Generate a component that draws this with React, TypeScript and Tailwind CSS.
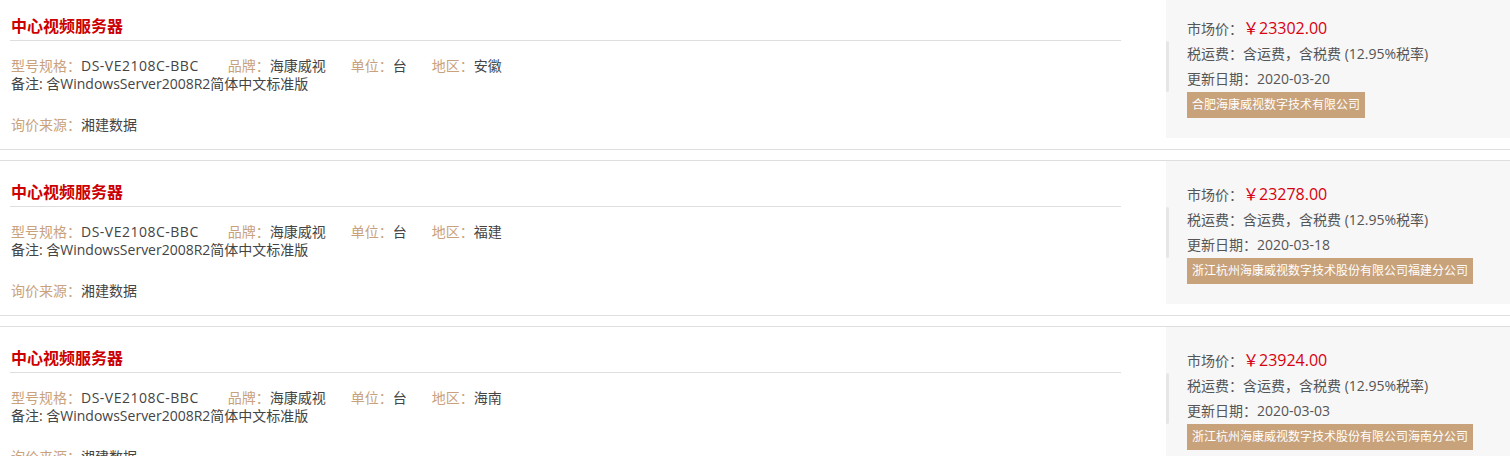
import React from 'react';

type Quote = {
  region: string;
  price: string;
  date: string;
  company: string;
};

const quotes: Quote[] = [
  { region: '安徽', price: '23302.00', date: '2020-03-20', company: '合肥海康威视数字技术有限公司' },
  { region: '福建', price: '23278.00', date: '2020-03-18', company: '浙江杭州海康威视数字技术股份有限公司福建分公司' },
  { region: '海南', price: '23924.00', date: '2020-03-03', company: '浙江杭州海康威视数字技术股份有限公司海南分公司' },
];

function Field({ label, value, wide }: { label: string; value: string; wide?: boolean }) {
  return (
    <span className={wide ? 'mr-[29px] whitespace-nowrap' : 'mr-[25px] whitespace-nowrap'}>
      <span className="text-[#c9a27c]">{label}：</span>
      <span className={wide ? 'text-[#444] tracking-[0.5px]' : 'text-[#444]'}>{value}</span>
    </span>
  );
}

function QuoteItem({ q }: { q: Quote }) {
  return (
    <div className="flex border-y border-[#dedede] mb-[10px] bg-white">
      {/* left: product info */}
      <div className="flex-1 pl-[10px] pr-[45px] pb-[15px]">
        <h3 className="pt-[17px] pl-px leading-[28px] text-[16px] font-bold text-[#cc0000] border-b border-[#dedede]">
          中心视频服务器
        </h3>
        <div className="mt-[16px] pl-px text-[14px] leading-[18px]">
          <div className="flex">
            <Field label="型号规格" value="DS-VE2108C-BBC" wide />
            <Field label="品牌" value="海康威视" />
            <Field label="单位" value="台" />
            <Field label="地区" value={q.region} />
          </div>
          <div className="text-[#444]">备注: 含WindowsServer2008R2简体中文标准版</div>
        </div>
        <div className="mt-[23px] pl-px text-[14px] leading-[18px]">
          <span className="text-[#c9a27c]">询价来源：</span>
          <span className="text-[#444]">湘建数据</span>
        </div>
      </div>

      {/* right: price panel */}
      <div className="relative w-[344px] self-start bg-[#f7f7f7] pt-[21px] pb-[20px] pl-[21px] text-[14px] text-[#555]">
        <div className="absolute left-0 top-[46px] h-[51px] w-[3px] rounded-sm bg-[#e6e6e6]" />
        <div className="leading-[24px]">
          市场价：<span className="text-[16px] text-[#d7000f]">￥{q.price}</span>
        </div>
        <div className="leading-[25px]">税运费：含运费，含税费 (12.95%税率)</div>
        <div className="leading-[25px]">更新日期：{q.date}</div>
        <div className="mt-px inline-block h-[26px] bg-[#c8a27b] px-[5px] text-[12px] leading-[26px] text-white">
          {q.company}
        </div>
      </div>
    </div>
  );
}

export default function App() {
  return (
    <div
      className="w-[1510px] h-[456px] overflow-hidden bg-white"
      style={{ fontFamily: '"Open Sans", "Noto Sans CJK SC", sans-serif' }}
    >
      <div className="-mt-[6px]">
        {quotes.map((q, i) => (
          <QuoteItem key={i} q={q} />
        ))}
      </div>
    </div>
  );
}
